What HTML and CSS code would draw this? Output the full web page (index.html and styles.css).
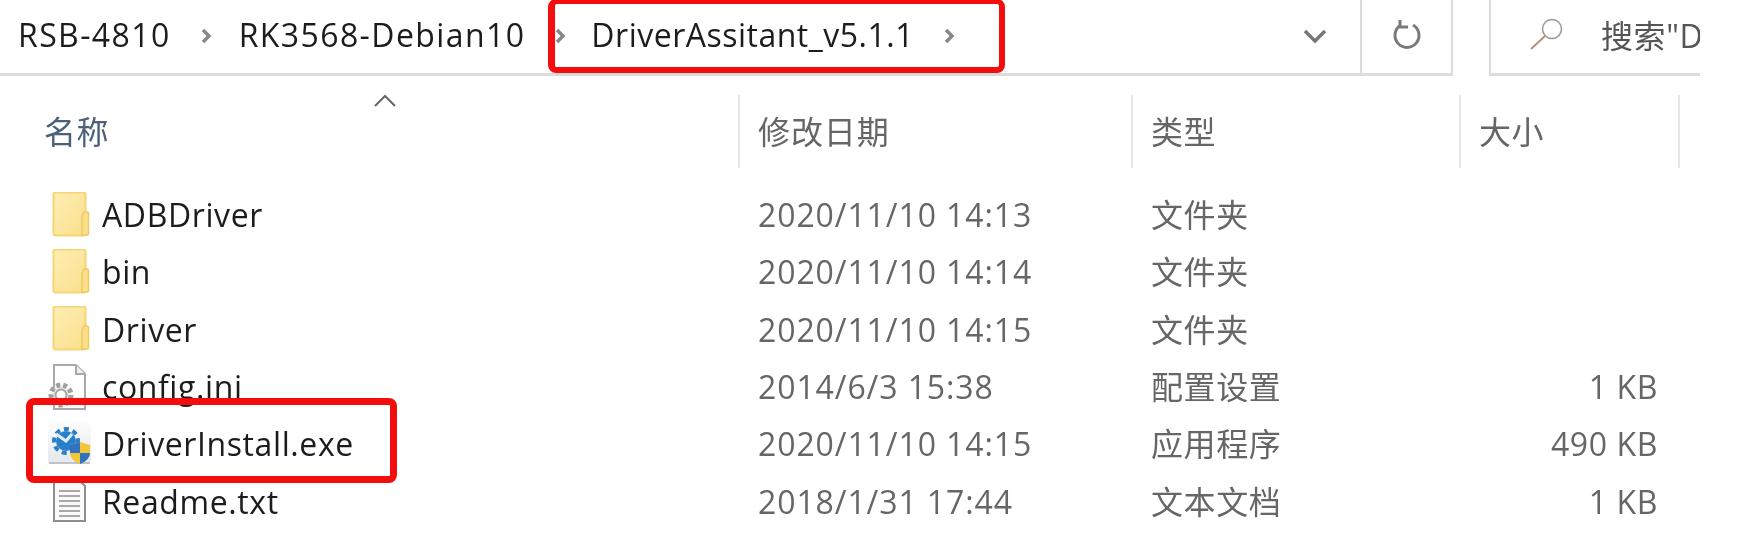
FILE: index.html
```html
<!DOCTYPE html>
<html lang="zh-CN">
<head>
    <meta charset="UTF-8">
    <title>DriverAssitant_v5.1.1</title>
    <link rel="stylesheet" href="styles.css">
</head>

<body>
    <svg class="defs" width="0" height="0">
        <defs>
            <linearGradient id="folderFill" x1="0" y1="0" x2="1" y2="1">
                <stop offset="0" stop-color="#fdeeb4"/>
                <stop offset="1" stop-color="#fbe08c"/>
            </linearGradient>
            <linearGradient id="tileFill" x1="0" y1="0" x2="0" y2="1">
                <stop offset="0" stop-color="#fdfdfe"/>
                <stop offset="1" stop-color="#e4e7eb"/>
            </linearGradient>
        </defs>
        <symbol id="folder" viewBox="0 0 46 46">
            <rect x="6.5" y="0.5" width="32" height="43" rx="2" fill="url(#folderFill)" stroke="#f4d675" stroke-width="2"/>
            <path d="M35 24 l2 -4 h3 a1.500 1.500 0 0 1 1.500 1.500 v20 a1.500 1.500 0 0 1 -1.500 1.500 h-5 z" fill="#fbe08c" stroke="#eeca62" stroke-width="1.500"/>
        </symbol>
        <symbol id="config" viewBox="0 0 46 46">
            <path d="M7 1 h22 l9 9 v35 h-31 z" fill="#fff" stroke="#a9a9a9" stroke-width="2"/>
            <path d="M29 1 v9 h9" fill="#eee" stroke="#a9a9a9" stroke-width="2"/>
            <circle cx="14" cy="31" r="10" fill="#eee" stroke="#a0a0a0" stroke-width="5" stroke-dasharray="4 3"/>
            <circle cx="14" cy="31" r="5.500" fill="#fff" stroke="#a5a5a5" stroke-width="2"/>
        </symbol>
        <symbol id="exe" viewBox="0 0 46 46">
            <rect x="1" y="0" width="43" height="43" rx="4" fill="url(#tileFill)"/>
            <path d="M2 42 h41" stroke="#b4b7bb" stroke-width="1.500"/>
            <circle cx="19" cy="20" r="10" fill="#2a7fc9"/>
            <circle cx="19" cy="20" r="12" fill="none" stroke="#2a7fc9" stroke-width="4" stroke-dasharray="5 4"/>
            <path d="M9 13 l10 7 6 -7" fill="none" stroke="#e2eff9" stroke-width="3"/>
            <path d="M33 21 l10 3 v8 q0 7 -10 11 q-10 -4 -10 -11 v-8 z" fill="#f4c534"/>
            <path d="M33 21 v11 h-10 v-8 z M33 32 h10 q0 7 -10 11 z" fill="#2f72c4"/>
        </symbol>
        <symbol id="text" viewBox="0 0 46 46">
            <path d="M7 1 h24 l7 7 v35 h-31 z" fill="#fafafa" stroke="#8f8f8f" stroke-width="2"/>
            <path d="M12 13 h21 M12 18 h21 M12 23 h21 M12 28 h21 M12 33 h21 M12 38 h21" stroke="#a8a8a8" stroke-width="2"/>
        </symbol>
    </svg>

    <div class="window">
        <div class="toolbar">
            <div class="address">
                <div class="crumbs">
                    <span>RSB-4810</span>
                    <svg class="crumb-arrow" viewBox="0 0 12 16"><path d="M3 2 l6 6 -6 6"/></svg>
                    <span>RK3568-Debian10</span>
                    <svg class="crumb-arrow arrow-tight" viewBox="0 0 12 16"><path d="M3 2 l6 6 -6 6"/></svg>
                    <span class="crumb-last">DriverAssitant_v5.1.1</span>
                    <svg class="crumb-arrow" viewBox="0 0 12 16"><path d="M3 2 l6 6 -6 6"/></svg>
                </div>
                <div class="drop">
                    <svg width="24" height="15" viewBox="0 0 24 15"><path d="M2 2 l10 10 10 -10" fill="none" stroke="#777" stroke-width="3.5"/></svg>
                </div>
                <div class="refresh">
                    <svg width="30" height="32" viewBox="0 0 30 32"><path d="M9 6 a12 12 0 1 0 12 0 M8 1 v7 h8" fill="none" stroke="#7a7a7a" stroke-width="3"/></svg>
                </div>
            </div>
            <div class="search">
                <svg class="search-icon" width="36" height="32" viewBox="0 0 36 32"><circle cx="23" cy="11" r="9.500" fill="none" stroke="#9a9a9a" stroke-width="1.600"/><path d="M16 18 L2 31" stroke="#b08f7a" stroke-width="1.800"/></svg>
                <span class="search-text">搜索"D</span>
            </div>
        </div>

        <div class="head row">
            <div class="col-name">名称<svg class="sort" width="22" height="13" viewBox="0 0 22 13"><path d="M1 12 L11 2 l10 10" fill="none" stroke="#666" stroke-width="2"/></svg></div>
            <div class="col-date">修改日期</div>
            <div class="col-type">类型</div>
            <div class="col-size">大小</div>
        </div>

        <div class="files">
            <div class="row">
                <div class="col-name"><svg class="icon"><use href="#folder"/></svg>ADBDriver</div>
                <div class="col-date">2020/11/10 14:13</div>
                <div class="col-type">文件夹</div>
                <div class="col-size"></div>
            </div>
            <div class="row">
                <div class="col-name"><svg class="icon"><use href="#folder"/></svg>bin</div>
                <div class="col-date">2020/11/10 14:14</div>
                <div class="col-type">文件夹</div>
                <div class="col-size"></div>
            </div>
            <div class="row">
                <div class="col-name"><svg class="icon"><use href="#folder"/></svg>Driver</div>
                <div class="col-date">2020/11/10 14:15</div>
                <div class="col-type">文件夹</div>
                <div class="col-size"></div>
            </div>
            <div class="row">
                <div class="col-name"><svg class="icon"><use href="#config"/></svg>config.ini</div>
                <div class="col-date">2014/6/3 15:38</div>
                <div class="col-type">配置设置</div>
                <div class="col-size">1 KB</div>
            </div>
            <div class="row">
                <div class="col-name"><svg class="icon"><use href="#exe"/></svg>DriverInstall.exe</div>
                <div class="col-date">2020/11/10 14:15</div>
                <div class="col-type">应用程序</div>
                <div class="col-size">490 KB</div>
            </div>
            <div class="row">
                <div class="col-name"><svg class="icon"><use href="#text"/></svg>Readme.txt</div>
                <div class="col-date">2018/1/31 17:44</div>
                <div class="col-type">文本文档</div>
                <div class="col-size">1 KB</div>
            </div>
        </div>

        <!-- 红框标注 -->
        <div class="mark mark-path"></div>
        <div class="mark mark-exe"></div>
    </div>
</body>

</html>
```

FILE: styles.css
```css
* {
    margin: 0;
    padding: 0;
    box-sizing: border-box;
}

html, body {
    height: 100%;
    background: #fff;
    overflow: hidden;
}

body {
    font-family: "Open Sans", "Noto Sans CJK SC", sans-serif;
    font-size: 32px;
    letter-spacing: 0.6px;
    color: #1c1c1c;
}

.defs {
    position: absolute;
}

.window {
    position: relative;
    width: 1700px;
    height: 558px;
    overflow: hidden;
}

.window > *:not(.mark) {
    filter: blur(0.6px);
}

/* 顶部地址栏 */
.toolbar {
    display: flex;
    height: 76px;
}

.address {
    display: flex;
    width: 1453px;
    border-bottom: 3px solid #dcdcdc;
    border-right: 2px solid #dcdcdc;
}

.crumbs {
    flex: 1;
    display: flex;
    align-items: center;
    padding: 0 0 4px 18px;
    letter-spacing: 1.4px;
    white-space: nowrap;
}

.crumb-last {
    letter-spacing: 0.5px;
}

.crumb-arrow {
    width: 12px;
    height: 16px;
    margin: 2px 27px 0 29px;
    fill: none;
    stroke: #888;
    stroke-width: 3.5;
}

.arrow-tight {
    margin-right: 25px;
}

.drop {
    width: 98px;
    display: flex;
    align-items: center;
    padding-left: 41px;
}

.refresh {
    width: 91px;
    display: flex;
    align-items: center;
    justify-content: center;
    border-left: 2px solid #dcdcdc;
    padding-bottom: 3px;
}

.search {
    margin-left: 36px;
    flex: 1;
    display: flex;
    align-items: center;
    gap: 36px;
    padding: 0 0 6px 38px;
    border-left: 2px solid #dcdcdc;
    border-bottom: 3px solid #dcdcdc;
    overflow: hidden;
    white-space: nowrap;
}

.search-icon, .search-text {
    flex: none;
}

.search-text {
    color: #555;
}

/* 文件列表 */
.row {
    display: grid;
    grid-template-columns: 740px 393px 328px 219px;
    align-items: center;
    height: 57.33px;
}

.col-name {
    display: flex;
    align-items: center;
    gap: 9px;
    padding-left: 47px;
}

.col-date, .col-type {
    padding-left: 18px;
    color: #666;
}

.col-date {
    letter-spacing: 0.9px;
}

.col-type {
    padding-bottom: 3px;
}

.col-size {
    padding-right: 22px;
    text-align: right;
    color: #666;
}

.icon {
    width: 46px;
    height: 46px;
    flex: none;
}

.head {
    height: 73px;
    margin-top: 19px;
    align-items: stretch;
    color: #4c607a;
}

.head > div {
    position: relative;
    display: flex;
    align-items: center;
    padding: 0 0 3px 18px;
    border-right: 2px solid #e6e6e6;
}

.head .col-name {
    padding-left: 44px;
}

.sort {
    position: absolute;
    left: 374px;
    top: -1px;
}

.files {
    margin-top: 18px;
}

/* 红框 */
.mark {
    position: absolute;
    border: 7px solid #f30d0d;
    border-radius: 8px;
}

.mark-path {
    left: 548px;
    top: -1px;
    width: 457px;
    height: 74px;
    border-width: 5px 6px 6px 7px;
}

.mark-exe {
    left: 26px;
    top: 398px;
    width: 371px;
    height: 85px;
}
```
